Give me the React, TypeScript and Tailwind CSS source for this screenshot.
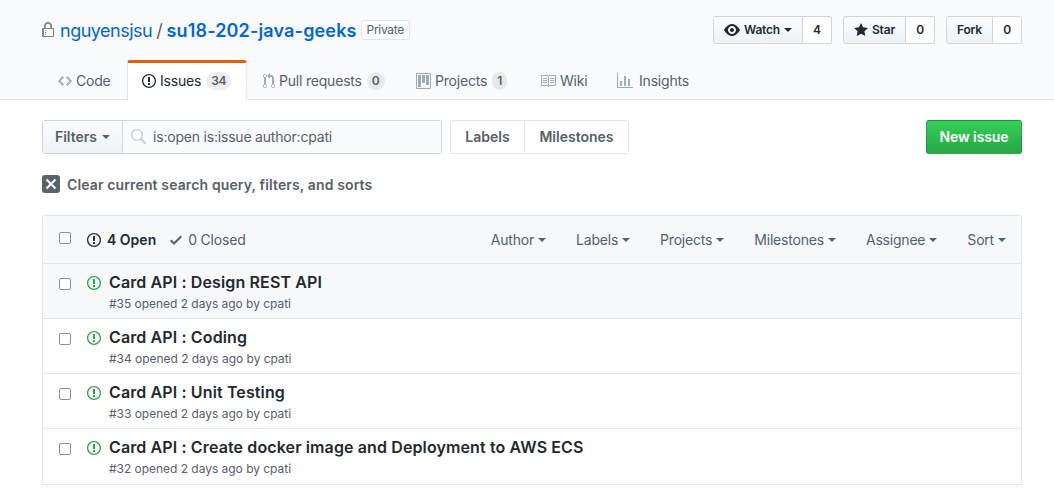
import type { ReactNode } from "react";

const ICONS = {
  lock: { w: 12, d: "M4 13H3v-1h1v1zm8-6v7c0 .55-.45 1-1 1H1c-.55 0-1-.45-1-1V7c0-.55.45-1 1-1h1V4c0-2.2 1.8-4 4-4s4 1.8 4 4v2h1c.55 0 1 .45 1 1zM3.8 6h4.41V4c0-1.22-.98-2.2-2.2-2.2-1.22 0-2.2.98-2.2 2.2v2H3.8zM11 7H2v7h9V7zM4 8H3v1h1V8zm0 2H3v1h1v-1z" },
  code: { w: 14, d: "M9.5 3L8 4.5 11.5 8 8 11.5 9.5 13 14 8 9.5 3zm-5 0L0 8l4.5 5L6 11.5 2.5 8 6 4.5 4.5 3z" },
  issue: { w: 14, d: "M7 2.3c3.14 0 5.7 2.56 5.7 5.7s-2.56 5.7-5.7 5.7A5.71 5.71 0 0 1 1.3 8c0-3.14 2.56-5.7 5.7-5.7zM7 1C3.14 1 0 4.14 0 8s3.14 7 7 7 7-3.14 7-7-3.14-7-7-7zm1 3H6v5h2V4zm0 6H6v2h2v-2z" },
  pull: { w: 12, d: "M11 11.28V5c-.03-.78-.34-1.47-.94-2.06C9.46 2.35 8.78 2.03 8 2H7V0L4 3l3 3V4h1c.27.02.48.11.69.31.21.2.3.42.31.69v6.28A1.993 1.993 0 0 0 10 15a1.993 1.993 0 0 0 1-3.72zm-1 2.92c-.66 0-1.2-.55-1.2-1.2 0-.65.55-1.2 1.2-1.2.65 0 1.2.55 1.2 1.2 0 .65-.55 1.2-1.2 1.2zM4 3c0-1.11-.89-2-2-2a1.993 1.993 0 0 0-1 3.72v6.56A1.993 1.993 0 0 0 2 15a1.993 1.993 0 0 0 1-3.72V4.72c.59-.34 1-.98 1-1.72zm-.8 10c0 .66-.55 1.2-1.2 1.2-.65 0-1.2-.55-1.2-1.2 0-.65.55-1.2 1.2-1.2.65 0 1.2.55 1.2 1.2zM2 4.2C1.34 4.2.8 3.65.8 3c0-.65.55-1.2 1.2-1.2.65 0 1.2.55 1.2 1.2 0 .65-.55 1.2-1.2 1.2z" },
  project: { w: 15, d: "M10 12h3V2h-3v10zm-4-2h3V2H6v8zm-4 4h3V2H2v12zm-1 1h13V1H1v14zM14 0H1a1 1 0 0 0-1 1v14a1 1 0 0 0 1 1h13a1 1 0 0 0 1-1V1a1 1 0 0 0-1-1z" },
  book: { w: 16, d: "M3 5h4v1H3V5zm0 3h4V7H3v1zm0 2h4V9H3v1zm11-5h-4v1h4V5zm0 2h-4v1h4V7zm0 2h-4v1h4V9zm2-6v9c0 .55-.45 1-1 1H9.5l-1 1-1-1H2c-.55 0-1-.45-1-1V3c0-.55.45-1 1-1h5.5l1 1 1-1H15c.55 0 1 .45 1 1zm-8 .5L7.5 3H2v9h6V3.5zm7-.5H9.5l-.5.5V12h6V3z" },
  graph: { w: 16, d: "M16 14v1H0V0h1v14h15zM5 13H3V8h2v5zm4 0H7V3h2v10zm4 0h-2V6h2v7z" },
  eye: { w: 16, d: "M8.06 2C3 2 0 8 0 8s3 6 8.06 6C13 14 16 8 16 8s-3-6-7.94-6zM8 12c-2.2 0-4-1.78-4-4 0-2.2 1.8-4 4-4 2.22 0 4 1.8 4 4 0 2.22-1.78 4-4 4zm2-4c0 1.11-.89 2-2 2-1.11 0-2-.89-2-2 0-1.11.89-2 2-2 1.11 0 2 .89 2 2z" },
  star: { w: 14, d: "M14 6l-4.9-.64L7 1 4.9 5.36 0 6l3.6 3.26L2.67 14 7 11.67 11.33 14l-.93-4.74L14 6z" },
  check: { w: 12, d: "M12 5l-8 8-4-4 1.5-1.5L4 10l6.5-6.5L12 5z" },
  x: { w: 12, d: "M7.48 8l3.75 3.75-1.48 1.48L6 9.48l-3.75 3.75-1.48-1.48L4.52 8 .77 4.25l1.48-1.48L6 6.52l3.75-3.75 1.48 1.48L7.48 8z" },
  search: { w: 16, d: "M15.7 13.3l-3.81-3.83A5.93 5.93 0 0 0 13 6c0-3.31-2.69-6-6-6S1 2.69 1 6s2.69 6 6 6c1.3 0 2.48-.41 3.47-1.11l3.83 3.81c.19.2.45.3.7.3.25 0 .52-.09.7-.3a.996.996 0 0 0 0-1.41v.01zM7 10.7c-2.59 0-4.7-2.11-4.7-4.7 0-2.59 2.11-4.7 4.7-4.7 2.59 0 4.7 2.11 4.7 4.7 0 2.59-2.11 4.7-4.7 4.7z" },
};

function Icon({ name, className }: { name: keyof typeof ICONS; className?: string }) {
  const icon = ICONS[name];
  return (
    <svg width={icon.w} height={16} viewBox={`0 0 ${icon.w} 16`} fill="currentColor" fillRule="evenodd" className={className}>
      <path d={icon.d} />
    </svg>
  );
}

function Caret({ className }: { className?: string }) {
  return <span className={`inline-block border-x-[4px] border-t-[4px] border-x-transparent border-t-current ${className ?? ""}`} />;
}

function Counter({ children }: { children: ReactNode }) {
  return (
    <span className="ml-[5px] rounded-[20px] bg-[#1b1f23]/[0.08] px-[5px] text-[12px] leading-[18px] font-semibold text-[#586069]">
      {children}
    </span>
  );
}

function SocialButton({ children, count, width }: { children: ReactNode; count: number; width: string }) {
  return (
    <div className="flex h-[28px] text-[12px] font-semibold text-[#24292e]">
      <div className={`flex items-center justify-center rounded-l-[3px] border border-[#d1d5da] bg-gradient-to-b from-[#fafbfc] to-[#eff3f6] ${width}`}>
        {children}
      </div>
      <div className="flex w-[29px] items-center justify-center rounded-r-[3px] border border-l-0 border-[#d1d5da] bg-white">
        {count}
      </div>
    </div>
  );
}

function Tab({ icon, label, count, width, gap = "mr-[4px]" }: { icon: keyof typeof ICONS; label: string; count?: number; width: string; gap?: string }) {
  return (
    <div className={`flex h-[40px] items-center pt-[1px] text-[14px] text-[#586069] ${width}`}>
      <Icon name={icon} className={`text-[#a3aab1] ${gap}`} />
      {label}
      {count !== undefined && <Counter>{count}</Counter>}
    </div>
  );
}

const SORTS = [
  { label: "Author", gap: "mr-[30px]" },
  { label: "Labels", gap: "mr-[30px]" },
  { label: "Projects", gap: "mr-[30px]" },
  { label: "Milestones", gap: "mr-[30px]" },
  { label: "Assignee", gap: "mr-[30px]" },
  { label: "Sort", gap: "" },
];

const ISSUES = [
  { num: 35, title: "Card API : Design REST API", hover: true },
  { num: 34, title: "Card API : Coding" },
  { num: 33, title: "Card API : Unit Testing" },
  { num: 32, title: "Card API : Create docker image and Deployment to AWS ECS" },
];

function Checkbox({ className }: { className?: string }) {
  return <span className={`block h-[12px] w-[12px] rounded-[2px] border border-[#8f8f8f] bg-white ${className ?? ""}`} />;
}

export default function App() {
  return (
    <div className="h-[502px] w-[1054px] overflow-hidden bg-white font-['Inter','Liberation_Sans',sans-serif] text-[14px] tracking-[-0.2px] text-[#24292e]">
      {/* repo header */}
      <div className="h-[100px] border-b border-[#e1e4e8] bg-[#fafbfc]">
        <div className="flex items-start justify-between pt-[16px] pr-[32px] pl-[42px]">
          <div className="flex h-[28px] items-center">
            <Icon name="lock" className="mr-[6px] text-[#7d848b]" />
            <span className="text-[18px] tracking-[-0.5px] text-[#0366d6]">nguyensjsu</span>
            <span className="mx-[4px] text-[18px] text-[#586069]">/</span>
            <span className="text-[18px] font-semibold tracking-[0.15px] text-[#0366d6]">su18-202-java-geeks</span>
            <span className="ml-[4px] rounded-[3px] border border-[#e1e4e8] px-[5px] text-[12px] leading-[18px] tracking-[-0.3px] text-[#586069]">Private</span>
          </div>
          <div className="flex gap-[11px]">
            <SocialButton count={4} width="w-[90px]">
              <Icon name="eye" className="mr-[4px]" />
              Watch
              <Caret className="ml-[4px]" />
            </SocialButton>
            <SocialButton count={0} width="w-[63px]">
              <Icon name="star" className="mr-[4px]" />
              Star
            </SocialButton>
            <SocialButton count={0} width="w-[47px]">
              Fork
            </SocialButton>
          </div>
        </div>
        <div className="mt-[16px] flex items-start pl-[58px]">
          <Tab icon="code" label="Code" width="w-[69px]" />
          <div className="relative z-10 flex h-[40px] w-[120px] items-center rounded-t-[3px] border-x border-[#e1e4e8] border-t-[3px] border-t-[#e36209] bg-white pb-[2px] pl-[14px] text-[14px]">
            <Icon name="issue" className="mr-[4px]" />
            Issues
            <Counter>34</Counter>
          </div>
          <div className="w-[16px]" />
          <Tab icon="pull" label="Pull requests" count={0} width="w-[153px]" />
          <Tab icon="project" label="Projects" count={1} width="w-[124px]" />
          <Tab icon="book" label="Wiki" width="w-[77px]" />
          <Tab icon="graph" label="Insights" width="" gap="mr-[6px]" />
        </div>
      </div>

      {/* filters */}
      <div className="flex items-start pt-[20px] pr-[32px] pl-[42px]">
        <div className="flex h-[34px] w-[400px] rounded-[3px] border border-[#d1d5da]">
          <div className="flex w-[80px] items-center justify-center border-r border-[#d1d5da] bg-gradient-to-b from-[#fafbfc] to-[#eff3f6] pb-[1px] font-semibold tracking-[0px] text-[#586069]">
            Filters
            <Caret className="ml-[5px]" />
          </div>
          <div className="flex flex-1 items-center bg-[#fafbfc] pb-[1px] pl-[7px] text-[#586069]">
            <Icon name="search" className="mr-[7px] text-[#c6cbd1]" />
            is:open is:issue author:cpati
          </div>
        </div>
        <div className="ml-[8px] flex h-[34px] w-[179px] rounded-[3px] border border-[#e1e4e8] pb-[1px] font-semibold tracking-[0px] text-[#586069]">
          <div className="flex w-[74px] items-center justify-center border-r border-[#e1e4e8]">Labels</div>
          <div className="flex flex-1 items-center justify-center">Milestones</div>
        </div>
        <div className="ml-auto flex h-[34px] w-[96px] items-center justify-center rounded-[3px] border border-[#1b1f23]/20 bg-gradient-to-b from-[#34d058] to-[#28a745] pb-[1px] font-semibold tracking-[-0.1px] text-white">
          New issue
        </div>
      </div>

      {/* clear filter */}
      <div className="mt-[21px] ml-[42px] flex h-[18px] items-center font-semibold tracking-[0.13px] text-[#586069]">
        <span className="mr-[7px] flex h-[18px] w-[18px] items-center justify-center rounded-[3px] bg-[#586069] text-white">
          <Icon name="x" />
        </span>
        Clear current search query, filters, and sorts
      </div>

      {/* issue list */}
      <div className="mt-[22px] mr-[32px] ml-[42px] rounded-t-[3px] border border-[#e1e4e8]">
        <div className="flex h-[48px] items-center border-b border-[#e1e4e8] bg-[#f6f8fa] pr-[15px] pl-[16px]">
          <Checkbox className="mb-[3px]" />
          <Icon name="issue" className="ml-[16px]" />
          <span className="ml-[6px] font-semibold tracking-[0px]">4 Open</span>
          <Icon name="check" className="ml-[14px] text-[#586069]" />
          <span className="ml-[6px] text-[#586069]">0 Closed</span>
          <div className="ml-auto flex items-center text-[#586069]">
            {SORTS.map((s) => (
              <span key={s.label} className={`flex items-center ${s.gap}`}>
                {s.label}
                <Caret className="ml-[4px]" />
              </span>
            ))}
          </div>
        </div>
        {ISSUES.map((issue) => (
          <div
            key={issue.num}
            className={`flex h-[55px] border-b border-[#e1e4e8] pt-[8px] pl-[16px] last:border-b-0 ${issue.hover ? "bg-[#f6f8fa]" : "bg-white"}`}
          >
            <Checkbox className="mt-[6px]" />
            <Icon name="issue" className="mt-[3px] ml-[16px] text-[#28a745]" />
            <div className="ml-[8px]">
              <div className="text-[16px] leading-[20px] font-semibold tracking-[0.12px]">{issue.title}</div>
              <div className="mt-[4px] text-[12px] leading-[16px] tracking-[-0.03px] text-[#586069]">
                #{issue.num} opened 2 days ago by cpati
              </div>
            </div>
          </div>
        ))}
      </div>
    </div>
  );
}
